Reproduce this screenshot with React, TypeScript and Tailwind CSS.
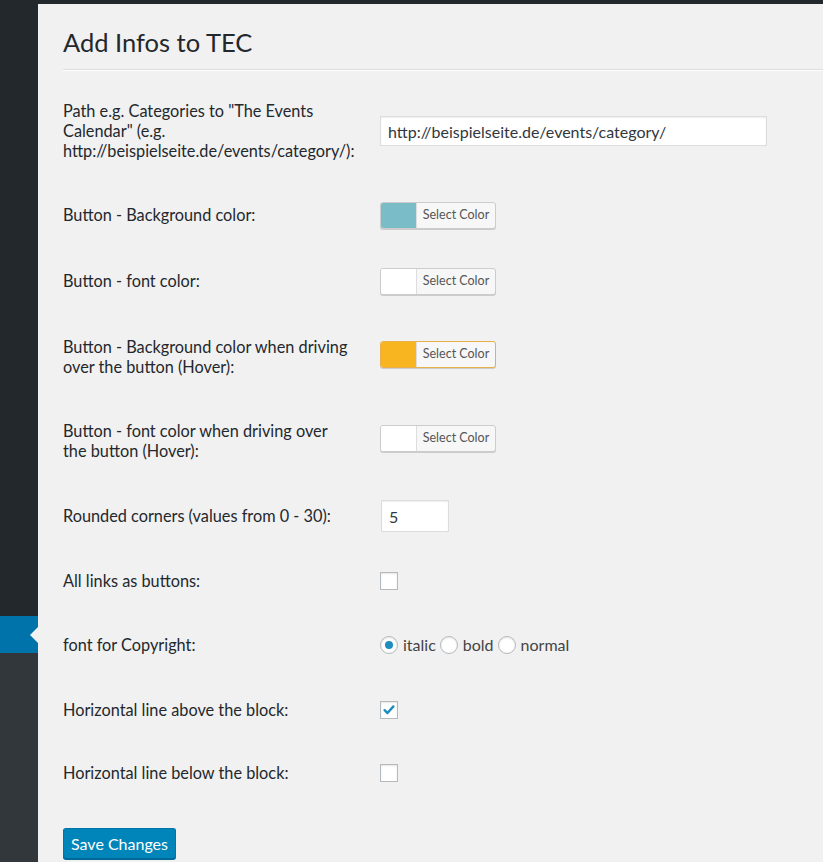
import React from 'react';

const font = { fontFamily: 'Lato, "Open Sans", "Liberation Sans", sans-serif' };

function ColorButton({ color, border }: { color: string; border?: string }) {
  return (
    <button
      type="button"
      className="flex h-[27px] w-[116px] items-stretch overflow-hidden rounded-[3px] border border-[#ccc] bg-[#f7f7f7] p-0 shadow-[0_1px_0_#ccc]"
      style={border ? { borderColor: border } : undefined}
    >
      <span className="w-[35px] shrink-0" style={{ backgroundColor: color }} />
      <span className="flex flex-1 items-center justify-center border-l border-[#ddd] text-[12.5px] text-[#555]">
        Select Color
      </span>
    </button>
  );
}

function Checkbox({ checked }: { checked?: boolean }) {
  return (
    <span className="flex h-[18px] w-[18px] items-center justify-center border border-[#b4b9be] bg-white shadow-[inset_0_1px_2px_rgba(0,0,0,0.1)]">
      {checked && (
        <svg viewBox="0 0 20 20" className="h-[18px] w-[18px]">
          <path d="M4.5 10.2l3.6 3.6 7.4-8.3" fill="none" stroke="#1e8cbe" strokeWidth={3} strokeLinecap="round" strokeLinejoin="round" />
        </svg>
      )}
    </span>
  );
}

function Radio({ checked, label }: { checked?: boolean; label: string }) {
  return (
    <label className="flex items-center gap-[5px]">
      <span className="flex h-[18px] w-[18px] items-center justify-center rounded-full border border-[#b4b9be] bg-white shadow-[inset_0_1px_2px_rgba(0,0,0,0.1)]">
        {checked && <span className="h-[8px] w-[8px] rounded-full bg-[#1e8cbe]" />}
      </span>
      <span className="text-[16px] text-[#444]">{label}</span>
    </label>
  );
}

function Row({ h, label, children }: { h: string; label: React.ReactNode; children: React.ReactNode }) {
  return (
    <div className={`flex items-center ${h}`}>
      <div className="w-[317px] shrink-0 text-[16.3px] leading-[20px] text-[#23282d] whitespace-nowrap">{label}</div>
      <div className="flex items-center">{children}</div>
    </div>
  );
}

export default function App() {
  return (
    <div className="flex h-[862px] w-full overflow-hidden bg-[#f1f1f1]" style={font}>
      {/* admin menu */}
      <div className="flex w-[38px] shrink-0 flex-col">
        <div className="h-[616px] bg-[#23282d]" />
        <div className="relative h-[37px] bg-[#0073aa]">
          <span className="absolute right-0 top-1/2 -mt-[8px] h-0 w-0 border-[8px] border-transparent border-r-[#f1f1f1]" />
        </div>
        <div className="flex-1 bg-[#32373c]" />
      </div>

      <div className="flex flex-1 flex-col">
        <div className="h-[4px] bg-[#23282d]" />
        <div className="pl-[25px]">
          <h1 className="pt-[23px] text-[25.5px] font-normal leading-[30px] text-[#23282d]">Add Infos to TEC</h1>
          <div className="mt-[12px] h-px bg-[#ddd]" />
          <div className="h-px bg-white" />

          <div className="mt-[8px] flex flex-col">
            <Row
              h="h-[104px]"
              label={
                <>
                  Path e.g. Categories to "The Events
                  <br />
                  Calendar" (e.g.
                  <br />
                  http://beispielseite.de/events/category/):
                </>
              }
            >
              <input
                type="text"
                defaultValue="http://beispielseite.de/events/category/"
                className="h-[30px] w-[387px] border border-[#ddd] bg-white px-[7px] text-[16px] text-[#32373c] shadow-[inset_0_1px_2px_rgba(0,0,0,0.07)] outline-none"
                style={font}
              />
            </Row>
            <Row h="h-[64px]" label="Button - Background color:">
              <ColorButton color="#7abdc8" />
            </Row>
            <Row h="h-[68px]" label="Button - font color:">
              <ColorButton color="#ffffff" />
            </Row>
            <Row
              h="h-[84px]"
              label={
                <>
                  Button - Background color when driving
                  <br />
                  over the button (Hover):
                </>
              }
            >
              <div className="-mt-[6px]">
                <ColorButton color="#f8b520" border="#e8b04a" />
              </div>
            </Row>
            <Row
              h="h-[84px]"
              label={
                <>
                  Button - font color when driving over
                  <br />
                  the button (Hover):
                </>
              }
            >
              <div className="-mt-[6px]">
                <ColorButton color="#ffffff" />
              </div>
            </Row>
            <Row h="h-[66px]" label="Rounded corners (values from 0 - 30):">
              <input
                type="text"
                defaultValue="5"
                className="ml-px h-[32px] w-[68px] border border-[#ddd] bg-white px-[7px] text-[16px] text-[#32373c] shadow-[inset_0_1px_2px_rgba(0,0,0,0.07)] outline-none"
                style={font}
              />
            </Row>
            <Row h="h-[64px]" label="All links as buttons:">
              <Checkbox />
            </Row>
            <Row h="h-[64px]" label="font for Copyright:">
              <div className="flex items-center gap-[4px]">
                <Radio checked label="italic" />
                <Radio label="bold" />
                <Radio label="normal" />
              </div>
            </Row>
            <Row h="h-[66px]" label="Horizontal line above the block:">
              <Checkbox checked />
            </Row>
            <Row h="h-[60px]" label="Horizontal line below the block:">
              <Checkbox />
            </Row>
          </div>

          <button
            type="button"
            className="mt-[25px] h-[31px] w-[113px] rounded-[3px] border border-[#0073aa] border-b-[#006799] bg-[#0085ba] text-[16px] text-white shadow-[0_1px_0_#006799]"
          >
            Save Changes
          </button>
        </div>
      </div>
    </div>
  );
}
